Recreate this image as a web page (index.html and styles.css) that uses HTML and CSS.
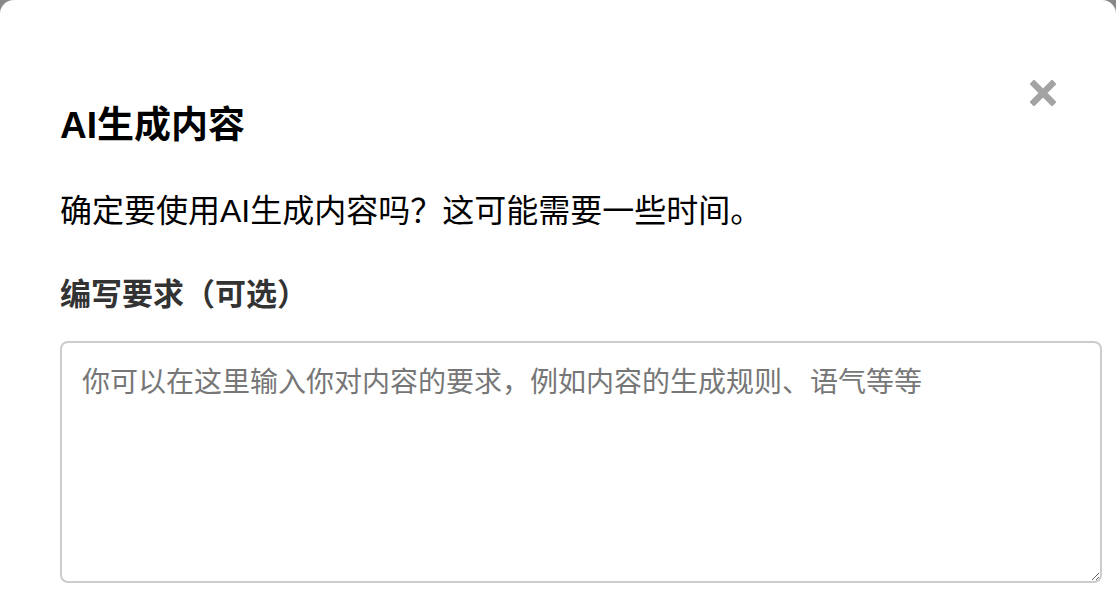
FILE: index.html
```html
<!DOCTYPE html>
<html lang="zh-CN">
<head>
  <meta charset="UTF-8">
  <meta name="viewport" content="width=device-width, initial-scale=1.0">
  <title>AI生成内容</title>
  <link rel="stylesheet" href="styles.css">
</head>
<body>
  <div class="modal">
    <button class="close-btn" aria-label="关闭">
      <svg width="26" height="26" viewBox="0 0 26 26">
        <path d="M4 4 L22 22 M22 4 L4 22" stroke="#a3a3a3" stroke-width="6.5" stroke-linecap="square" fill="none"/>
      </svg>
    </button>
    <h2 class="modal-title">AI生成内容</h2>
    <p class="modal-text">确定要使用AI生成内容吗？这可能需要一些时间。</p>
    <label class="field-label" for="prompt">编写要求（可选）</label>
    <textarea id="prompt" class="prompt-input" placeholder="你可以在这里输入你对内容的要求，例如内容的生成规则、语气等等"></textarea>
  </div>
</body>
</html>
```

FILE: styles.css
```css
* {
  box-sizing: border-box;
  margin: 0;
  padding: 0;
}
body {
  font-family: "Liberation Sans", "Noto Sans CJK SC", sans-serif;
  background-color: #888;
  height: 100vh;
  overflow: hidden;
}
.modal {
  position: relative;
  background-color: white;
  border-radius: 14px 14px 0 0;
  height: 620px;
  padding: 104px 14px 0 60px;
  display: flex;
  flex-direction: column;
}
.close-btn {
  position: absolute;
  top: 80px;
  right: 60px;
  width: 26px;
  height: 26px;
  background: none;
  border: none;
  cursor: pointer;
}
.close-btn svg {
  display: block;
}
.modal-title {
  font-size: 37px;
  font-weight: bold;
  color: #000;
  line-height: 44px;
}
.modal-text {
  margin-top: 41px;
  font-size: 32px;
  line-height: 44px;
  color: #000;
}
.field-label {
  margin-top: 42px;
  font-size: 31px;
  font-weight: bold;
  line-height: 40px;
  color: #333;
}
.prompt-input {
  margin-top: 26px;
  width: 100%;
  height: 242px;
  border: 2px solid #ccc;
  border-radius: 8px;
  padding: 20px 20px;
  font-family: "Liberation Sans", "Noto Sans CJK SC", sans-serif;
  font-size: 28px;
  line-height: 40px;
  color: #333;
  resize: vertical;
}
.prompt-input::placeholder {
  color: #777;
}
```
